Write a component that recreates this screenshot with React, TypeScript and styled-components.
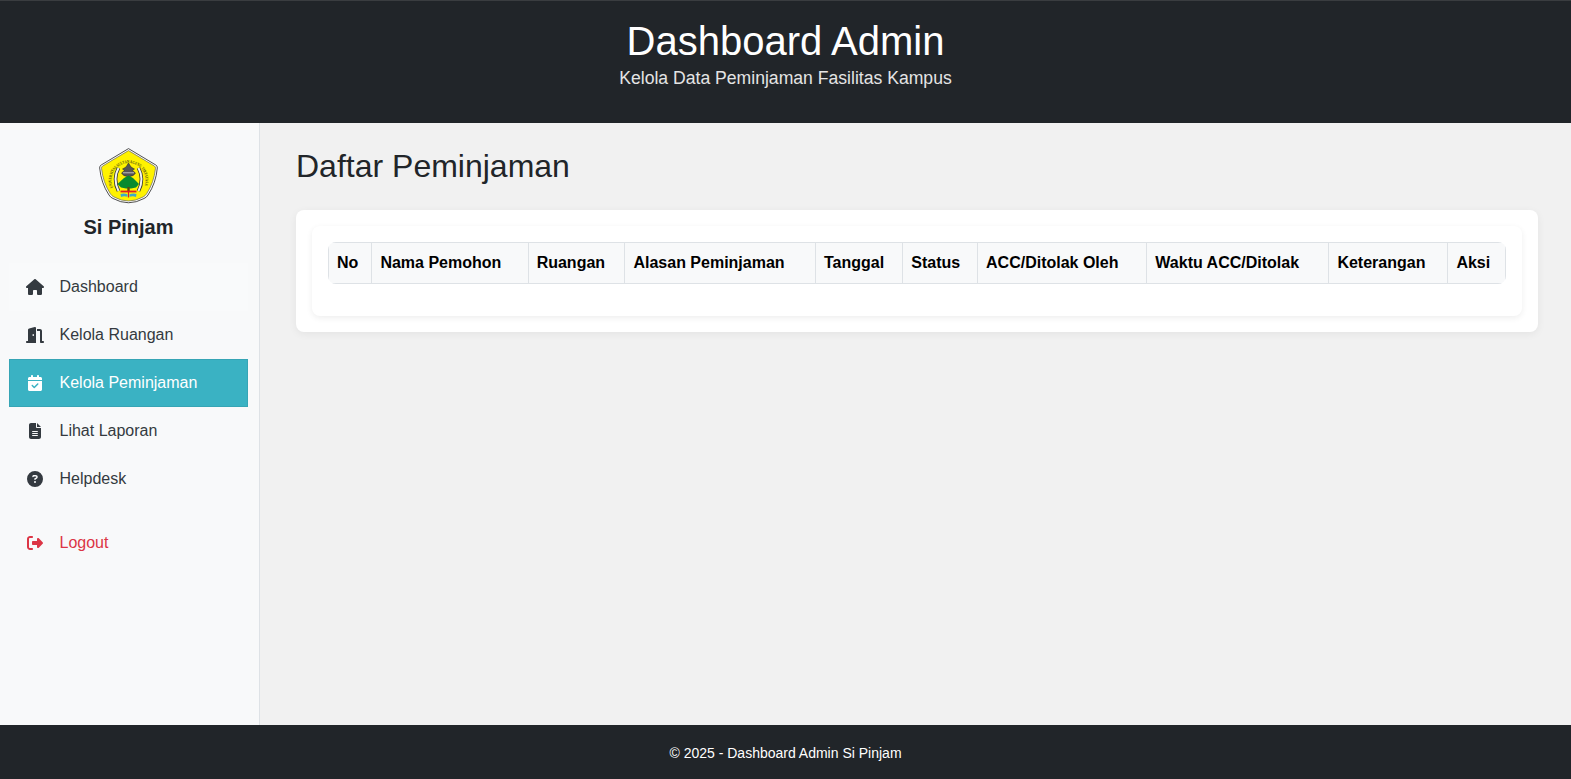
import React from "react";
import styled, { createGlobalStyle } from "styled-components";
import { FaHouse, FaDoorOpen, FaCalendarCheck, FaFileLines, FaCircleQuestion, FaRightFromBracket } from "react-icons/fa6";

const Global = createGlobalStyle`
  * { box-sizing: border-box; }
  html, body { margin: 0; height: 100%; }
  body { font-family: "Liberation Sans", Arial, sans-serif; font-size: 16px; line-height: 1.5; color: #212529; background: #f1f1f1; }
  #root { height: 100vh; }
`;

const Page = styled.div`
  height: 100%;
  display: flex;
  flex-direction: column;
`;

const Header = styled.header`
  height: 123px;
  flex: none;
  background: #212529;
  border-top: 1px solid #3a3d40;
  color: #fff;
  text-align: center;
  padding-top: 16px;
`;

const HeaderTitle = styled.h1`
  margin: 0;
  font-size: 40px;
  font-weight: 400;
  line-height: 48px;
`;

const HeaderSub = styled.p`
  margin: 0;
  font-size: 17.6px;
  line-height: 26px;
  color: #e4e4e4;
`;

const Body = styled.div`
  flex: 1;
  min-height: 0;
  display: flex;
`;

const Sidebar = styled.aside`
  width: 260px;
  flex: none;
  background: #f8f9fa;
  border-right: 1px solid #dee2e6;
  padding: 25px 11px 0 9px;
`;

const Brand = styled.div`
  display: flex;
  flex-direction: column;
  align-items: center;
  margin-bottom: 21px;
`;

const BrandName = styled.div`
  margin-top: 6px;
  font-size: 20px;
  line-height: 30px;
  font-weight: 700;
  color: #212529;
`;

const Nav = styled.nav`
  display: flex;
  flex-direction: column;
`;

const NavItem = styled.a<{ $active?: boolean; $danger?: boolean; $spaced?: boolean; $tinted?: boolean }>`
  height: 48px;
  display: flex;
  align-items: center;
  padding-left: 15px;
  margin-top: ${(p) => (p.$spaced ? "16px" : "0")};
  font-size: 16px;
  color: ${(p) => (p.$active ? "#fff" : p.$danger ? "#dc3545" : "#343a40")};
  background: ${(p) => (p.$active ? "#3ab2c3" : p.$tinted ? "#f9fafb" : "transparent")};
  border: 1px solid ${(p) => (p.$active ? "#36a5b5" : "transparent")};
`;

const NavIcon = styled.span`
  width: 20px;
  margin-right: 14.5px;
  display: flex;
  justify-content: center;
  svg {
    width: 18px;
    height: 16px;
    flex: none;
  }
`;

const Main = styled.main`
  flex: 1;
  min-width: 0;
  padding: 24px 33px 0 36px;
`;

const PageTitle = styled.h2`
  margin: 0 0 25px;
  font-size: 32px;
  line-height: 38px;
  font-weight: 400;
  color: #212529;
`;

const OuterCard = styled.section`
  background: #fff;
  border-radius: 8px;
  padding: 16px;
  box-shadow: 0 2px 8px rgba(0, 0, 0, 0.06);
`;

const InnerCard = styled.div`
  background: #fff;
  border-radius: 8px;
  padding: 16px 16px 32px;
  box-shadow: 0 2px 6px rgba(0, 0, 0, 0.07);
`;

const TableClip = styled.div`
  border-radius: 8px;
  overflow: hidden;
`;

const Table = styled.table`
  width: 100%;
  border-collapse: collapse;
`;

const Th = styled.th`
  padding: 8px;
  height: 41px;
  text-align: left;
  font-size: 16px;
  font-weight: 700;
  color: #000;
  background: #f8f9fa;
  border: 1px solid #dee2e6;
  white-space: nowrap;
`;

const Footer = styled.footer`
  height: 54px;
  flex: none;
  background: #212529;
  color: #fff;
  font-size: 14px;
  padding-top: 2px;
  display: flex;
  align-items: center;
  justify-content: center;
`;

const RingText = styled.text`
  font-family: "Liberation Serif", serif;
  font-size: 4.4px;
  font-weight: 700;
  fill: #4a4a14;
`;

const Logo = () => (
  <svg width="59" height="58" viewBox="0 0 59 58" aria-hidden="true">
    <path d="M29.5 0.6 L56.8 17 Q58.6 18 58.3 20 Q57 35 49 47 Q47.5 49.5 45 50.5 Q29.5 59 14 50.5 Q11.5 49.5 10 47 Q2 35 0.7 20 Q0.4 18 2.2 17 Z" fill="#fff" stroke="#3a3a3a" strokeWidth="0.9" />
    <path d="M29.5 2.6 L55.4 18 Q56.6 18.8 56.5 20.3 Q55 34.5 47.6 45.8 Q46.2 48 44 49 Q29.5 57 15 49 Q12.8 48 11.4 45.8 Q4 34.5 2.5 20.3 Q2.4 18.8 3.6 18 Z" fill="#fff200" stroke="#666" strokeWidth="0.7" />
    <path id="si-pinjam-ring" d="M14.2 39.5 A17 17 0 1 1 44.8 39.5" fill="none" />
    <RingText>
      <textPath href="#si-pinjam-ring" textLength="66" lengthAdjust="spacingAndGlyphs">UNIVERSITAS SULTAN AGENG TIRTAYASA</textPath>
    </RingText>
    <path d="M19.5 20 Q13.5 31 19.5 43" fill="none" stroke="#333" strokeWidth="3.6" />
    <path d="M19.5 20 Q13.5 31 19.5 43" fill="none" stroke="#f4f4f4" strokeWidth="2" />
    <path d="M39.5 20 Q45.5 31 39.5 43" fill="none" stroke="#333" strokeWidth="3.6" />
    <path d="M39.5 20 Q45.5 31 39.5 43" fill="none" stroke="#f4f4f4" strokeWidth="2" />
    <path d="M29.5 15 L32 19 L35.5 21 L33.5 22.5 L36.5 25 Q35 28 31 28.5 L28 28.5 Q24 28 22.5 25 L25.5 22.5 L23.5 21 L27 19 Z" fill="#555" stroke="#222" strokeWidth="0.5" />
    <path d="M24 24.8 H35" stroke="#ddd" strokeWidth="0.8" />
    <path d="M29.5 27.5 L34 30 L40 36 L37 39.5 L32 40.5 L27 40.5 L22 39.5 L18.5 36 L25 30 Z" fill="#078a2f" />
    <rect x="28.3" y="39" width="2.4" height="4" fill="#5a4a10" />
    <path d="M21.5 43.5 H37.5" stroke="#e02020" strokeWidth="1.8" />
    <path d="M29.5 44 V49.5" stroke="#e02020" strokeWidth="1.2" />
    <path d="M21.5 46 Q25 45 28.5 46.3 V48.8 Q25 47.6 22 49 Z M30.5 46.3 Q34 45 37.5 46 L37 49 Q34 47.6 30.5 48.8 Z" fill="#3fa9c9" />
  </svg>
);

const navItems = [
  { label: "Dashboard", Icon: FaHouse, tinted: true },
  { label: "Kelola Ruangan", Icon: FaDoorOpen },
  { label: "Kelola Peminjaman", Icon: FaCalendarCheck, active: true },
  { label: "Lihat Laporan", Icon: FaFileLines },
  { label: "Helpdesk", Icon: FaCircleQuestion },
];

const columns = ["No", "Nama Pemohon", "Ruangan", "Alasan Peminjaman", "Tanggal", "Status", "ACC/Ditolak Oleh", "Waktu ACC/Ditolak", "Keterangan", "Aksi"];

export default function App() {
  return (
    <Page>
      <Global />
      <Header>
        <HeaderTitle>Dashboard Admin</HeaderTitle>
        <HeaderSub>Kelola Data Peminjaman Fasilitas Kampus</HeaderSub>
      </Header>
      <Body>
        <Sidebar>
          <Brand>
            <Logo />
            <BrandName>Si Pinjam</BrandName>
          </Brand>
          <Nav>
            {navItems.map(({ label, Icon, active, tinted }) => (
              <NavItem key={label} $active={active} $tinted={tinted}>
                <NavIcon><Icon /></NavIcon>
                {label}
              </NavItem>
            ))}
            <NavItem $danger $spaced>
              <NavIcon><FaRightFromBracket /></NavIcon>
              Logout
            </NavItem>
          </Nav>
        </Sidebar>
        <Main>
          <PageTitle>Daftar Peminjaman</PageTitle>
          <OuterCard>
            <InnerCard>
              <TableClip>
                <Table>
                  <thead>
                    <tr>
                      {columns.map((c) => (
                        <Th key={c}>{c}</Th>
                      ))}
                    </tr>
                  </thead>
                </Table>
              </TableClip>
            </InnerCard>
          </OuterCard>
        </Main>
      </Body>
      <Footer>© 2025 - Dashboard Admin Si Pinjam</Footer>
    </Page>
  );
}
